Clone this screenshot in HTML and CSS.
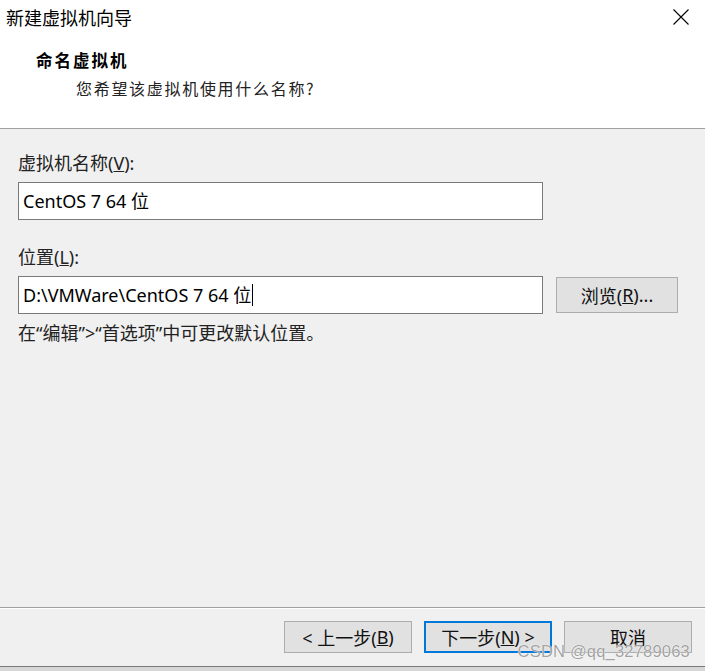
FILE: index.html
```html
<!DOCTYPE html>
<html lang="zh-CN">
<head>
<meta charset="utf-8">
<title>新建虚拟机向导</title>
<link rel="stylesheet" href="styles.css">
</head>
<body>
<div class="window">
  <div class="header">
    <div class="titlebar">
      <span class="title">新建虚拟机向导</span>
      <span class="close">
        <svg width="16" height="16" viewBox="0 0 16 16"><path d="M0.5 0.5 L15.5 15.5 M15.5 0.5 L0.5 15.5" stroke="#000" stroke-width="1.1" fill="none"/></svg>
      </span>
    </div>
    <div class="heading">命名虚拟机</div>
    <div class="subheading">您希望该虚拟机使用什么名称?</div>
  </div>
  <div class="content">
    <div class="label">虚拟机名称(<u>V</u>):</div>
    <div class="field wide">CentOS 7 64 位</div>
    <div class="label second">位置(<u>L</u>):</div>
    <div class="row">
      <div class="field">D:\VMWare\CentOS 7 64 位<span class="caret"></span></div>
      <div class="btn browse">浏览(<u>R</u>)...</div>
    </div>
    <div class="hint">在“编辑”&gt;“首选项”中可更改默认位置。</div>
  </div>
  <div class="footer">
    <div class="btn">&lt; 上一步(<u>B</u>)</div>
    <div class="btn primary">下一步(<u>N</u>) &gt;</div>
    <div class="btn">取消</div>
    <div class="watermark">CSDN @qq_32789063</div>
  </div>
</div>
</body>
</html>
```
FILE: styles.css
```css
html, body {
  margin: 0;
  padding: 0;
}
body {
  background: #d6d6d6;
  font-family: "Noto Sans", "Noto Sans CJK SC", sans-serif;
  color: #000;
  width: 705px;
  height: 671px;
  overflow: hidden;
}
.window {
  width: 705px;
  height: 666px;
  background: #f0f0f0;
  border-bottom: 1px solid #7a7a7a;
  display: flex;
  flex-direction: column;
}
.header {
  background: #fff;
  height: 128px;
  border-bottom: 1px solid #a0a0a0;
  flex: none;
}
.titlebar {
  height: 34px;
  display: flex;
  align-items: center;
  justify-content: space-between;
  padding: 0 16px 0 6px;
}
.title {
  font-family: "Noto Sans CJK SC", sans-serif;
  font-size: 18px;
  line-height: 34px;
}
.close {
  display: flex;
  width: 16px;
  height: 16px;
}
.heading {
  margin: 14px 0 0 36px;
  font-family: "Noto Sans CJK SC", sans-serif;
  font-weight: 700;
  font-size: 16.5px;
  letter-spacing: 2px;
  line-height: 24px;
}
.subheading {
  margin: 4px 0 0 76px;
  font-family: "Noto Sans CJK SC", sans-serif;
  font-size: 16px;
  letter-spacing: 1.7px;
  line-height: 24px;
  color: #222;
}
.content {
  flex: 1;
  padding: 22px 0 0 18px;
}
.label {
  font-size: 18px;
  line-height: 24px;
  margin-bottom: 7px;
  color: #222;
}
.label.second {
  margin-top: 25px;
}
.field {
  box-sizing: border-box;
  width: 525px;
  height: 38px;
  background: #fff;
  border: 1px solid #7a7a7a;
  padding: 0 0 0 4px;
  font-size: 18px;
  line-height: 34px;
  display: flex;
  align-items: center;
  white-space: pre;
}
.caret {
  display: inline-block;
  width: 1px;
  height: 22px;
  background: #000;
  margin-left: 1px;
}
.row {
  display: flex;
  align-items: center;
  gap: 13px;
}
.btn {
  box-sizing: border-box;
  width: 128px;
  height: 32px;
  background: #e1e1e1;
  border: 1px solid #adadad;
  display: flex;
  align-items: center;
  justify-content: center;
  font-size: 18px;
  color: #111;
  white-space: pre;
}
.btn.browse {
  width: 122px;
  height: 36px;
}
.btn.primary {
  border: 2px solid #0078d7;
}
.hint {
  margin-top: 7px;
  font-size: 18px;
  line-height: 24px;
  color: #222;
}
.footer {
  position: relative;
  flex: none;
  border-top: 1px solid #a0a0a0;
  box-shadow: inset 0 1px 0 #fff;
  display: flex;
  justify-content: flex-end;
  align-items: flex-start;
  gap: 12px;
  padding: 13px 13px 0 0;
  box-sizing: border-box;
  height: 59px;
}
.watermark {
  position: absolute;
  right: 15px;
  top: 34px;
  font-family: "Liberation Sans", Arial, sans-serif;
  font-size: 16.5px;
  color: rgba(120, 120, 120, 0.7);
  text-shadow: 0 0 1px #fff, 0 0 1px #fff;
  letter-spacing: 0.2px;
}
```
